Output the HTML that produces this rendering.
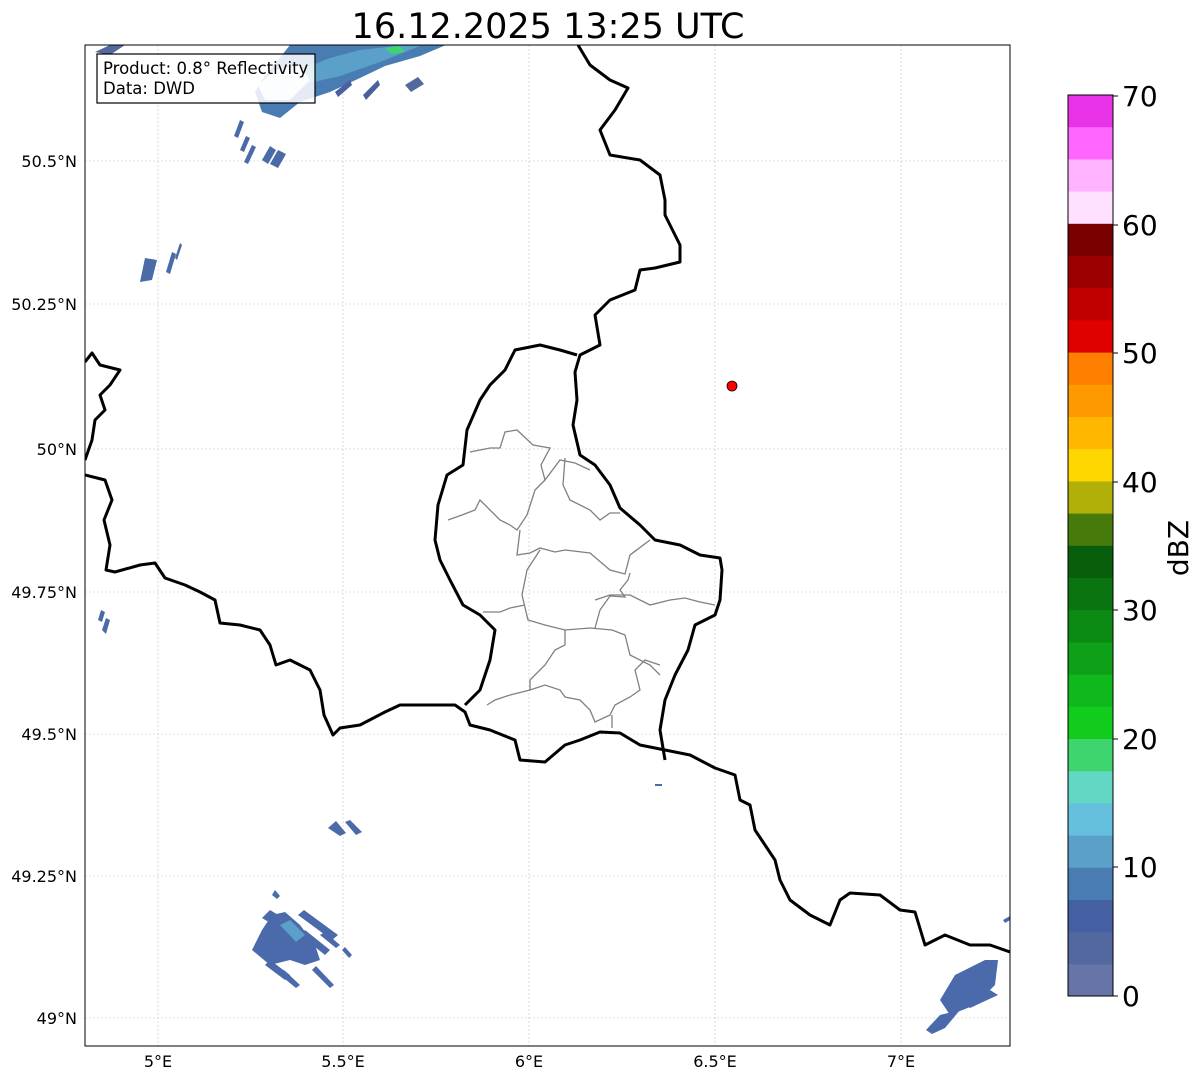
<!DOCTYPE html>
<html><head><meta charset="utf-8"><style>
body{margin:0;background:#fff;width:1202px;height:1081px;overflow:hidden;font-family:"DejaVu Sans","Liberation Sans",sans-serif;}
svg{position:absolute;left:0;top:0}
</style></head><body>
<svg width="1202" height="1081" viewBox="0 0 1202 1081" xmlns="http://www.w3.org/2000/svg" font-family="DejaVu Sans, Liberation Sans, sans-serif">
<text x="548" y="38" font-size="35" text-anchor="middle" fill="#000">16.12.2025 13:25 UTC</text>
<defs><clipPath id="c"><rect x="85" y="45" width="925" height="1001"/></clipPath></defs>
<g clip-path="url(#c)">
<g stroke="#c4c4c4" stroke-width="0.6" stroke-dasharray="2,2">
<line x1="158" y1="45" x2="158" y2="1046"/><line x1="343" y1="45" x2="343" y2="1046"/><line x1="529" y1="45" x2="529" y2="1046"/><line x1="715" y1="45" x2="715" y2="1046"/><line x1="901" y1="45" x2="901" y2="1046"/>
<line x1="85" y1="161" x2="1010" y2="161"/><line x1="85" y1="304" x2="1010" y2="304"/><line x1="85" y1="449" x2="1010" y2="449"/><line x1="85" y1="592" x2="1010" y2="592"/><line x1="85" y1="734" x2="1010" y2="734"/><line x1="85" y1="876" x2="1010" y2="876"/><line x1="85" y1="1018" x2="1010" y2="1018"/>
</g>
<polygon points="255,92 262,112 280,118 300,102 330,92 360,78 385,66 420,56 446,45 290,45 262,80" fill="#4a7cb4"/>
<polygon points="300,70 330,58 360,50 395,46 420,46 380,62 340,76 305,84" fill="#5aa0c8"/>
<polygon points="385,48 400,46 405,52 392,54" fill="#3ed46e"/>
<polygon points="258,85 275,70 300,65 310,80 290,100 265,100" fill="#e8eef5"/>
<polygon points="95,52 110,45 125,45 110,55" fill="#5468a0"/>
<polygon points="405,85 418,77 424,84 411,92" fill="#5468a0"/>
<polygon points="335,92 350,80 352,85 338,97" fill="#4a5f9e"/>
<polygon points="363,95 378,80 380,85 366,100" fill="#4a5f9e"/>
<g fill="#4a6aa8">
<polygon points="234,136 240,120 244,122 238,138"/><polygon points="240,150 246,136 250,138 244,152"/><polygon points="244,162 252,145 256,147 248,164"/><polygon points="262,160 270,146 276,150 268,164"/><polygon points="270,164 278,150 286,154 278,168"/>
<polygon points="140,282 145,258 157,260 152,280"/><polygon points="166,272 172,252 176,254 170,274"/><polygon points="175,258 180,243 182,245 177,260"/>
<polygon points="98,620 101,610 105,612 102,622"/><polygon points="102,630 106,618 110,620 106,634"/>
<polygon points="328,828 336,821 346,833 340,836"/><polygon points="345,822 350,820 362,832 356,835"/>
<rect x="655" y="784" width="7" height="2"/>
<polygon points="1003,920 1010,916 1010,920 1005,923"/>
</g>
<g fill="#4a6aac">
<polygon points="252,950 262,930 272,915 285,912 300,925 315,945 320,960 305,965 290,960 270,965"/>
<polygon points="262,918 270,910 300,928 292,936"/>
<polygon points="298,915 304,910 338,935 332,940"/>
<polygon points="300,935 305,930 330,950 325,955"/>
<polygon points="272,895 275,890 280,896 277,899"/>
<polygon points="265,965 270,960 290,975 285,980"/>
<polygon points="280,975 284,970 300,985 296,988"/>
<polygon points="312,970 316,966 334,985 330,988"/>
<polygon points="342,950 345,947 352,955 349,958"/>
<polygon points="320,935 325,932 340,945 336,948"/>
</g>
<polygon points="280,925 290,920 305,935 296,942" fill="#5aa0c8"/>
<g fill="#4a6aac">
<polygon points="940,1000 955,975 985,960 998,960 995,985 975,1005 950,1015"/>
<polygon points="926,1030 940,1015 960,1010 945,1028 932,1034"/>
<polygon points="960,1000 990,990 998,995 970,1008"/>
</g>
<g fill="none" stroke="#808080" stroke-width="1.3">
<polyline points="470,452 480,450 490,448 500,448 505,432 517,430 533,445 550,448 541,465 545,480 560,460 575,463 590,470"/>
<polyline points="565,458 563,485 570,500 590,510 600,520 610,513 620,513"/>
<polyline points="448,520 462,515 475,510 480,500 490,510 500,520 510,525 517,530 527,515 535,490 545,480"/>
<polyline points="520,530 517,555 530,553 540,548 555,552 565,550 590,553 610,570 625,574 630,555 650,540"/>
<polyline points="540,550 527,570 522,595 528,620 545,625 565,630 590,628 612,630 625,635 630,655 650,665 660,675"/>
<polyline points="630,573 628,580 620,590 625,597 610,596 600,610 595,628"/>
<polyline points="595,600 610,595 630,595 650,605 670,600 685,598 700,602 715,605"/>
<polyline points="483,612 500,612 510,608 525,605"/>
<polyline points="565,630 565,645 555,650 545,665 530,680 530,690 545,685 560,690 565,697 580,700 590,710 595,722 610,715 615,705 630,697 640,690 635,670 645,660 660,665"/>
<polyline points="487,705 495,700 510,695 530,690"/>
<polyline points="612,715 612,728"/>
</g>
<g fill="none" stroke="#000" stroke-width="3" stroke-linejoin="round">
<polyline points="85,475 105,480 112,500 104,520 110,545 106,570 115,572 140,565 155,563 165,578 185,585 200,592 215,600 220,623 240,625 260,630 270,645 276,665 290,660 310,670 320,690 324,715 333,735 340,728 360,725 385,712 400,705 430,705 455,705 465,712 470,725 490,730 515,740 520,760 545,762 565,745 580,740 600,732 620,733 640,745 665,750 690,755 715,768 735,775 740,800 750,805 755,830 775,860 780,880 790,900 810,915 830,925 840,900 850,893 880,895 900,910 915,912 925,945 945,935 970,945 990,945 1010,952"/>
<polyline points="578,45 590,65 610,80 628,88 615,110 600,130 610,155 640,160 660,175 665,200 665,215 680,245 680,262 655,268 640,270 635,290 610,300 595,315 600,345 580,355 575,372 577,400 573,425 580,455 595,465 610,485 620,508 640,525 655,540 680,545 700,555 720,558 722,570 720,600 715,615 695,625 688,650 675,675 665,700 660,730 665,760"/>
<polyline points="577,355 560,350 540,345 515,350 505,370 490,385 480,400 467,430 463,465 447,475 438,505 435,540 440,560 450,580 463,605 480,615 495,630 490,660 480,690 465,705"/>
<polyline points="85,362 92,353 100,365 120,370 110,385 100,395 105,410 95,420 92,440 85,460"/>
</g>
<circle cx="732" cy="386" r="5" fill="#ff0000" stroke="#000" stroke-width="0.8"/>
</g>
<rect x="85" y="45" width="925" height="1001" fill="none" stroke="#000" stroke-width="1"/>
<rect x="97" y="54" width="218" height="49" fill="#fff" fill-opacity="0.85" stroke="#000" stroke-width="1.2"/>
<text x="103" y="74" font-size="16.5">Product: 0.8° Reflectivity</text>
<text x="103" y="94" font-size="16.5">Data: DWD</text>
<g font-size="16" text-anchor="end">
<text x="77" y="167">50.5°N</text><text x="77" y="310">50.25°N</text><text x="77" y="455">50°N</text><text x="77" y="598">49.75°N</text><text x="77" y="740">49.5°N</text><text x="77" y="882">49.25°N</text><text x="77" y="1024">49°N</text>
</g>
<g font-size="16" text-anchor="middle">
<text x="158" y="1067">5°E</text><text x="343" y="1067">5.5°E</text><text x="529" y="1067">6°E</text><text x="715" y="1067">6.5°E</text><text x="901" y="1067">7°E</text>
</g>
<g>
<rect x="1068" y="95.0" width="45" height="32.6" fill="#e832e8"/>
<rect x="1068" y="127.2" width="45" height="32.6" fill="#ff66ff"/>
<rect x="1068" y="159.4" width="45" height="32.6" fill="#ffb3ff"/>
<rect x="1068" y="191.6" width="45" height="32.6" fill="#ffe0ff"/>
<rect x="1068" y="223.8" width="45" height="32.6" fill="#780000"/>
<rect x="1068" y="256.0" width="45" height="32.6" fill="#9c0000"/>
<rect x="1068" y="288.2" width="45" height="32.6" fill="#c00000"/>
<rect x="1068" y="320.4" width="45" height="32.6" fill="#e00000"/>
<rect x="1068" y="352.6" width="45" height="32.6" fill="#ff7f00"/>
<rect x="1068" y="384.8" width="45" height="32.6" fill="#ff9900"/>
<rect x="1068" y="417.0" width="45" height="32.6" fill="#ffb700"/>
<rect x="1068" y="449.2" width="45" height="32.6" fill="#ffd700"/>
<rect x="1068" y="481.4" width="45" height="32.6" fill="#b0b008"/>
<rect x="1068" y="513.6" width="45" height="32.6" fill="#467a0a"/>
<rect x="1068" y="545.8" width="45" height="32.6" fill="#085e0a"/>
<rect x="1068" y="578.0" width="45" height="32.6" fill="#0a7510"/>
<rect x="1068" y="610.2" width="45" height="32.6" fill="#0b8b14"/>
<rect x="1068" y="642.4" width="45" height="32.6" fill="#0da018"/>
<rect x="1068" y="674.6" width="45" height="32.6" fill="#0fb81c"/>
<rect x="1068" y="706.8" width="45" height="32.6" fill="#12cc1c"/>
<rect x="1068" y="739.0" width="45" height="32.6" fill="#3ed46e"/>
<rect x="1068" y="771.2" width="45" height="32.6" fill="#62d8c4"/>
<rect x="1068" y="803.4" width="45" height="32.6" fill="#64c0dc"/>
<rect x="1068" y="835.6" width="45" height="32.6" fill="#5aa0c8"/>
<rect x="1068" y="867.8" width="45" height="32.6" fill="#4a7cb4"/>
<rect x="1068" y="900.0" width="45" height="32.6" fill="#445fa2"/>
<rect x="1068" y="932.2" width="45" height="32.6" fill="#5468a0"/>
<rect x="1068" y="964.4" width="45" height="31.6" fill="#6674a8"/>
<rect x="1068" y="95" width="45" height="901" fill="none" stroke="#000" stroke-width="1"/>
<g stroke="#000" stroke-width="1"><line x1="1113" y1="96" x2="1118" y2="96"/><line x1="1113" y1="225" x2="1118" y2="225"/><line x1="1113" y1="353" x2="1118" y2="353"/><line x1="1113" y1="482" x2="1118" y2="482"/><line x1="1113" y1="610" x2="1118" y2="610"/><line x1="1113" y1="739" x2="1118" y2="739"/><line x1="1113" y1="867" x2="1118" y2="867"/><line x1="1113" y1="996" x2="1118" y2="996"/></g>
<g font-size="28"><text x="1122" y="106">70</text><text x="1122" y="235">60</text><text x="1122" y="363">50</text><text x="1122" y="492">40</text><text x="1122" y="620">30</text><text x="1122" y="749">20</text><text x="1122" y="877">10</text><text x="1122" y="1006">0</text></g>
<text x="1188" y="548" font-size="28" text-anchor="middle" transform="rotate(-90 1188 548)">dBZ</text>
</g>
</svg>
</body></html>
